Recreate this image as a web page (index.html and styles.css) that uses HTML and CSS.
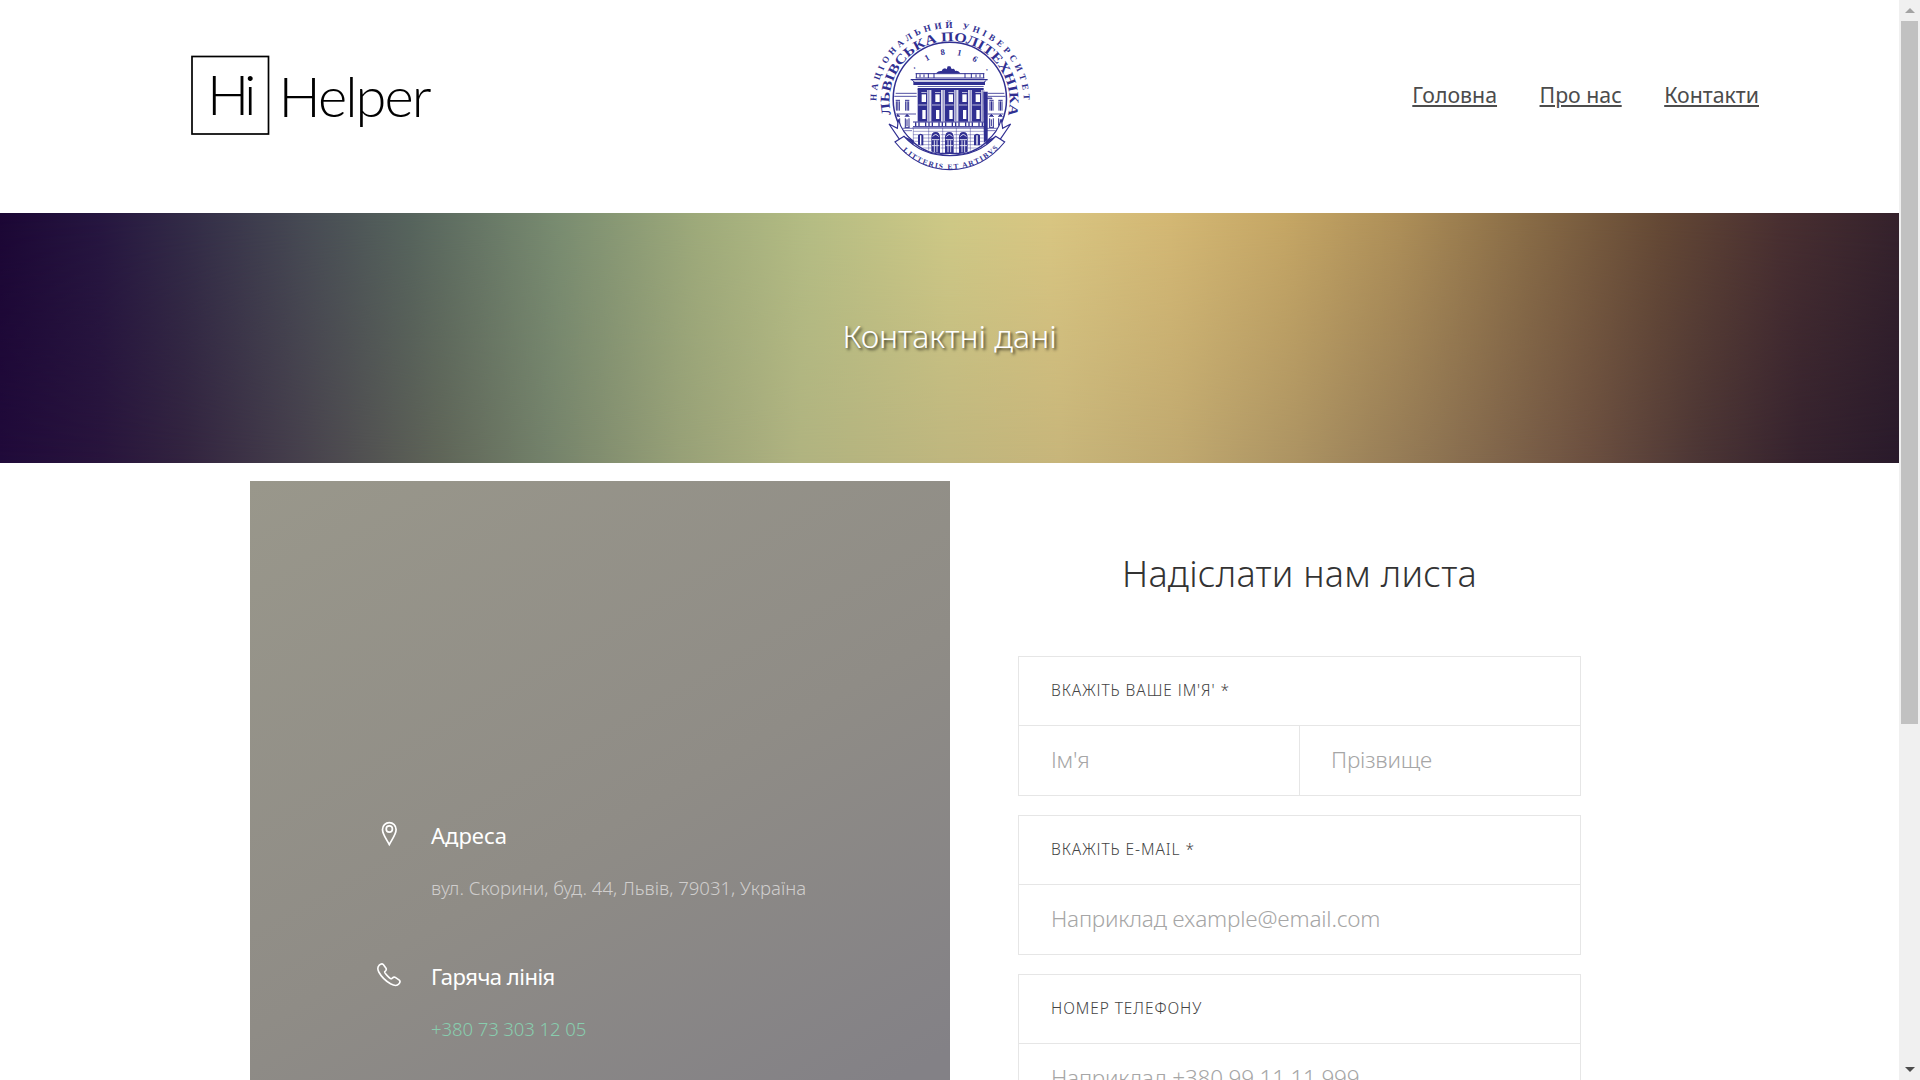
FILE: index.html
```html
<!DOCTYPE html>
<html lang="uk">
<head>
<meta charset="utf-8">
<title>Hi Helper — Контакти</title>
<link rel="stylesheet" href="styles.css">
</head>
<body>
<div class="page">
  <header class="header">
    <svg class="logo" width="250" height="80" viewBox="0 0 250 80">
      <rect x="1" y="1.500" width="76.500" height="77.500" fill="none" stroke="#000" stroke-width="1.700"/>
      <text x="16" y="59.500" textLength="49.500" lengthAdjust="spacing">Hi</text>
      <text x="87.500" y="61.800" textLength="153" lengthAdjust="spacing">Helper</text>
    </svg>
    <svg class="emblem" width="200" height="170" viewBox="0 0 600 510">
      <defs>
        <path id="arc-outer" d="M79 273A221 219 0 0 1 521 273"/>
        <path id="arc-name" d="M123 313A180 180 0 1 1 476 304"/>
        <path id="arc-year" d="M180 212A131 131 0 0 1 420 212"/>
        <path id="arc-motto" d="M155 419A204 204 0 0 0 452 407"/>
        <clipPath id="disc"><circle cx="299.500" cy="267" r="167"/></clipPath>
        <g id="bay">
          <rect x="0" y="238" width="29" height="97"/>
          <g fill="#fff"><rect x="12" y="253" width="13" height="23"/><rect x="14" y="300" width="10" height="27"/><rect x="2" y="284" width="25" height="2"/><rect x="11" y="246" width="16" height="2"/></g>
          <path d="M12 298l7-8 8 8z"/><path d="M32.500 240v94M36.500 240v94" stroke-width="1.500"/>
        </g>
        <g id="door">
          <path d="M0 430v-48q0-16 13-16t13 16v48z"/>
          <path d="M4 380q9-13 18 0M2 389h22M9 391v36M17 391v36M2 407h22" stroke="#fff" stroke-width="2.500"/>
        </g>
        <g id="sidewindow"><path d="M0 271h13M2 274v28M11 274v28M6.500 274v28" stroke-width="3"/><path d="M0 320l6-7 7 7M1 325v27M12 325v27M6 328v20M-1 352h15" stroke-width="3"/></g>
      </defs>
      <g fill="#302f91" stroke="#302f91" stroke-width="0" font-family="'Liberation Serif',serif">
        <text font-size="27" font-weight="bold"><textPath href="#arc-outer" textLength="688">НАЦІОНАЛЬНИЙ УНІВЕРСИТЕТ</textPath></text>
        <text font-size="40" font-weight="bold"><textPath href="#arc-name" textLength="648" lengthAdjust="spacingAndGlyphs">ЛЬВІВСЬКА ПОЛІТЕХНІКА</textPath></text>
        <text font-size="26" font-weight="bold"><textPath href="#arc-year" startOffset="34" textLength="242">·1816·</textPath></text>
      </g>
      <circle cx="299.500" cy="267" r="170" fill="none" stroke="#302f91" stroke-width="4.500"/>
      <g clip-path="url(#disc)" fill="#302f91" stroke="#302f91" stroke-width="0">
        <path d="M258 190q8-9 17-7 2-8 10-8l5 3 3-9h8l4 8 7-1 4 7q9-3 15 7z"/>
        <path d="M197 191h206M197 204h206M199 190v14M235 190v14M252 190v14M345 190v14M364 190v14M401 190v14M210 193v9M222 193v9M378 193v9M390 193v9" fill="none" stroke-width="3"/>
        <path d="M182 207h231v4H182zM190 215h215v10H190zM203 228h198v2H203zM203 234h198v6H203z"/>
        <path d="M187 211l7 6M409 211l-7 6" stroke-width="3"/>
        <use href="#bay" x="203"/><use href="#bay" x="244"/><use href="#bay" x="284"/><use href="#bay" x="325"/><use href="#bay" x="365"/>
        <path d="M400 245h13v190h-11z"/>
        <path d="M137 250h63M130 259h70M413 250h50M413 259h60M138 312h60M413 312h60M412 264h14v2h-14z" fill="none" stroke-width="2.500"/>
        <use href="#sidewindow" x="137"/><use href="#sidewindow" x="165"/><use href="#sidewindow" x="418"/><use href="#sidewindow" x="445"/>
        <path d="M189 336h213M189 350h213M187 354h216" fill="none" stroke-width="3"/>
        <path d="M197 337v12M207 337v12M227 337v12M237 337v12M247 337v12M267 337v12M277 337v12M287 337v12M307 337v12M317 337v12M327 337v12M347 337v12M357 337v12M367 337v12M387 337v12M397 337v12" stroke-width="4"/>
        <path d="M190 354v70M190 364h212M190 374h55M190 384h55M190 394h55M190 404h55M190 414h55M272 374h13M272 384h13M272 394h13M272 404h13M272 414h13M312 374h15M312 384h15M312 394h15M312 404h15M312 414h15M353 374h48M353 384h48M353 394h48M353 404h48M353 414h48M236 354v76M278 354v76M319 354v76M361 354v76" fill="none" stroke-width="1.300"/>
        <path d="M204 406v-30q8-9 16 0v30zM372 406v-30q9-9 18 0v30z"/>
        <path d="M212 376v28M381 376v28" stroke="#fff" stroke-width="4"/>
        <use href="#door" x="244"/><use href="#door" x="285"/><use href="#door" x="327"/>
        <path d="M225 430h150" stroke-width="4"/>
        <path d="M145 355h43M411 355h45M150 362h36M411 362h40" stroke-width="2"/>
      </g>
      <g fill="#fff" stroke="#302f91" stroke-width="3.500" stroke-linejoin="miter">
        <path d="M149 389L117 342 142 355 145 328Q156 368 190 394L188 405 163 380z"/>
        <path d="M450 389L482 342 458 355 454 328Q443 368 409 394L411 405 436 380z"/>
        <path d="M162 379Q214 437 299.500 437T437 379L464 396Q397 479 299.500 479T135 396z"/>
      </g>
      <path d="M164 380l25 22V390M436 380l-25 22V390" fill="#302f91" stroke="#302f91" stroke-width="2"/>
      <text font-size="22" font-weight="bold" fill="#302f91" font-family="'Liberation Serif',serif"><textPath href="#arc-motto" startOffset="4" textLength="318">LITTERIS ET ARTIBVS</textPath></text>
    </svg>
    <nav class="nav">
      <a href="#">Головна</a>
      <a href="#">Про нас</a>
      <a href="#">Контакти</a>
    </nav>
  </header>

  <section class="banner"><h1>Контактні дані</h1></section>

  <main class="content">
    <section class="info">
      <div class="info-item">
        <svg width="26" height="26" viewBox="0 0 26 26" fill="none" stroke="#fff" stroke-width="1.700">
          <path d="M13.300 23.500C11 19 6.500 13.500 6.500 8.500a6.800 6.800 0 0 1 13.600 0C20.100 13.500 15.600 19 13.300 23.500z"/>
          <circle cx="13.300" cy="8" r="3.100"/>
        </svg>
        <div><h3>Адреса</h3><p>вул. Скорини, буд. 44, Львів, 79031, Україна</p></div>
      </div>
      <div class="info-item">
        <svg width="26" height="26" viewBox="0 0 26 26" fill="none" stroke="#fff" stroke-width="1.600" stroke-linejoin="round">
          <path d="M3.200 3.200C4.500 2 6 1.200 7.300 2.500L10 6.200c1 1.600-.2 2.600-1.300 3.600-.7.900 5.800 7.500 6.800 7 1-.8 2.200-2.300 3.800-1.400l4 2.700c1.400 1.200.6 2.700-.5 4-1.300 1.600-4.500 1.800-8.300-.3C9.500 18.800 5.500 15 2.800 10 1.500 7.500 1.800 4.700 3.200 3.200z"/>
        </svg>
        <div><h3 class="hotline">Гаряча лінія</h3><p class="phone">+380 73 303 12 05</p></div>
      </div>
    </section>

    <section class="letter">
      <h2>Надіслати нам листа</h2>
      <form class="form">
        <div class="field">
          <label>Вкажіть ваше ім'я' *</label>
          <div class="inputs"><input type="text" placeholder="Ім'я"><input type="text" class="last" placeholder="Прізвище"></div>
        </div>
        <div class="field">
          <label>Вкажіть e-mail *</label>
          <div class="inputs"><input type="text" placeholder="Наприклад example@email.com"></div>
        </div>
        <div class="field">
          <label>Номер телефону</label>
          <div class="inputs"><input type="text" placeholder="Наприклад +380 99 11 11 999"></div>
        </div>
      </form>
    </section>
  </main>
</div>
<aside class="scrollbar">
  <span class="arrow up"></span>
  <span class="thumb"></span>
  <span class="arrow down"></span>
</aside>
</body>
</html>
```
FILE: styles.css
```css
* { box-sizing: border-box; margin: 0; padding: 0; }
body {
  display: grid;
  grid-template-columns: 1fr 21px;
  height: 1080px;
  overflow: hidden;
  background: #fff;
  font-family: "Noto Sans", sans-serif;
  font-weight: 400;
}
.page { height: 1080px; overflow: hidden; }

.header {
  display: grid;
  grid-template-columns: 659px 200px 1fr;
  align-items: center;
  height: 213px;
  padding: 0 140px 23px 191px;
  background: #fff;
}
.logo text { font-family: Lato, sans-serif; font-weight: 300; font-size: 56px; fill: #000; }
.nav { display: flex; justify-content: flex-end; gap: 42.5px; }
.nav a {
  font-size: 21.3px;
  line-height: 30px;
  color: #4c4c4c;
  text-decoration: underline;
  text-decoration-thickness: 2px;
  text-underline-offset: 2px;
}

.banner {
  position: relative;
  display: flex;
  align-items: center;
  justify-content: center;
  height: 250px;
  padding-bottom: 4px;
  background: linear-gradient(90deg, #1c0735 0, #261640 100px, #322b47 184px, #474b54 306px, #56645d 410px, #7a8d71 560px, #9fab7b 700px, #b5bd84 810px, #cfc986 950px, #d9c682 1050px, #d4b874 1170px, #c6a765 1285px, #ae8f58 1400px, #8b6e47 1520px, #654935 1660px, #4a3031 1780px, #35222c 1899px);
}
.banner::before {
  content: "";
  position: absolute;
  inset: 0;
  background: linear-gradient(90deg, #200a3a 0, #28143c 100px, #32233f 184px, #46404c 300px, #5f6558 440px, #73816a 545px, #97a077 680px, #b0b380 800px, #bfb67e 950px, #c7b57a 1060px, #bfa86f 1180px, #ab9262 1300px, #8f7553 1430px, #6b4f40 1590px, #4b3535 1700px, #35222e 1800px, #291a2b 1899px);
  -webkit-mask-image: linear-gradient(180deg, transparent, #000);
  mask-image: linear-gradient(180deg, transparent, #000);
}
.banner h1 {
  position: relative;
  color: #fff;
  font-size: 32px;
  font-weight: 350;
  line-height: 44px;
  text-shadow: 2px 2px 3px rgba(0, 0, 0, .65);
}

.content { display: grid; grid-template-columns: 700px 699px; padding: 18px 0 0 250px; }
.info {
  display: flex;
  flex-direction: column;
  gap: 59px;
  height: 700px;
  padding: 340px 0 0 126px;
  background: linear-gradient(150deg, #99978b 0%, #8f8c86 50%, #838186 88%);
}
.info-item { display: grid; grid-template-columns: 26px 1fr; column-gap: 29px; }
.info h3 { color: #fff; font-size: 22px; line-height: 28px; font-weight: 400; }
.info .hotline { letter-spacing: -.5px; }
.info p { margin-top: 26px; padding-bottom: 2px; font-size: 18.55px; line-height: 26px; font-weight: 300; color: #d0cecd; }
.info .phone { color: #88cdae; letter-spacing: -.1px; }

.letter { padding: 69px 68px 0; }
.letter h2 {
  height: 106px;
  text-align: center;
  color: #333;
  font-size: 36px;
  font-weight: 300;
  line-height: 48px;
  letter-spacing: .25px;
}
.form { display: grid; grid-template-columns: minmax(0, 1fr); gap: 19px; width: 563px; }
.field { border: 1px solid #e6e6e6; }
.field label {
  display: block;
  height: 68px;
  padding-left: 32px;
  font-size: 15.5px;
  line-height: 67px;
  font-weight: 300;
  letter-spacing: .93px;
  text-transform: uppercase;
  color: #444;
}
.inputs { display: flex; border-top: 1px solid #e6e6e6; }
.inputs input {
  flex: 1;
  min-width: 0;
  height: 69px;
  padding: 0 32px 2px;
  border: 0;
  background: #fff;
  outline: 0;
  font: 300 22.5px "Noto Sans", sans-serif;
  letter-spacing: -.2px;
}
.inputs .last { flex: 0 0 281px; border-left: 1px solid #e6e6e6; padding-left: 31px; }
.inputs input::placeholder { color: #a6a6a6; opacity: 1; }

.scrollbar {
  display: flex;
  flex-direction: column;
  align-items: center;
  height: 1080px;
  background: #f0f0f0;
}
.arrow { height: 21px; width: 21px; display: flex; align-items: center; justify-content: center; }
.arrow::before { content: ""; border: 5px solid transparent; border-top-width: 0; }
.up::before { border-bottom-color: #a3a3a3; }
.down::before { border-width: 5px 5px 0; border-top-color: #4d4d4d; }
.thumb { width: 17px; height: 703px; background: #c1c1c1; }
.down { margin-top: auto; }
```
